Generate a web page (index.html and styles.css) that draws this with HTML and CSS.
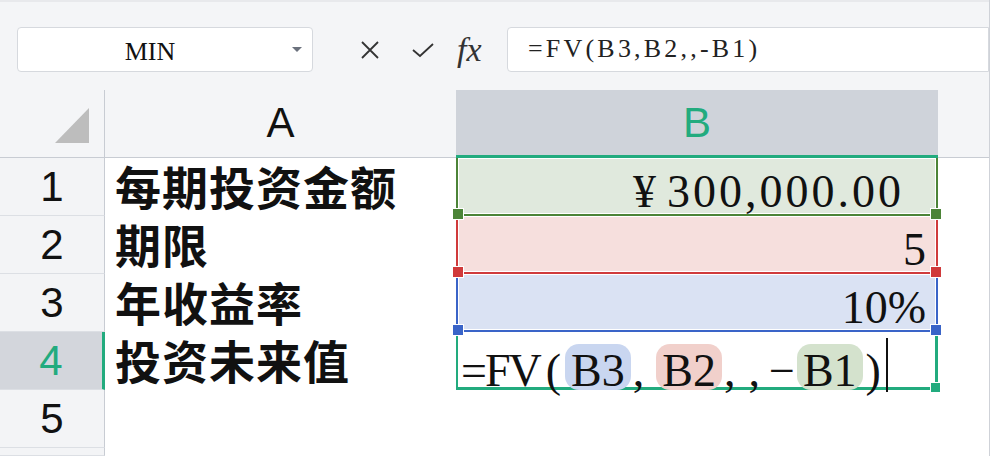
FILE: index.html
```html
<!DOCTYPE html>
<html lang="zh-CN">
<head>
    <meta charset="UTF-8">
    <title>FV 函数</title>
    <link rel="stylesheet" href="styles.css">
</head>
<body>
<div class="page">
    <div class="toolbar">
        <div class="name-box">
            <div class="name-text">MIN</div>
            <div class="name-caret"><span class="caret"></span></div>
        </div>
        <div class="fx-tools">
            <svg class="tool-cancel" width="20" height="20" viewBox="0 0 20 20">
                <path d="M2 2 L18 18 M18 2 L2 18" stroke="#333" stroke-width="1.8" fill="none"/>
            </svg>
            <svg class="tool-ok" width="24" height="18" viewBox="0 0 24 18">
                <path d="M2 9 L9 15 L22 3" stroke="#333" stroke-width="1.8" fill="none"/>
            </svg>
            <span class="tool-fx">fx</span>
        </div>
        <div class="formula-box">=FV(B3,B2,,-B1)</div>
    </div>

    <div class="sheet">
        <div class="corner">
            <svg width="34" height="35" viewBox="0 0 34 35"><polygon points="34,0 34,35 0,35" fill="#bdbdbd"/></svg>
        </div>
        <div class="col-head">A</div>
        <div class="col-head active">B</div>
        <div class="col-head"></div>

        <div class="row-head">1</div>
        <div class="cell label">每期投资金额</div>
        <div class="cell num range green"><span class="acct"><span class="yen">¥</span>300,000.00</span></div>
        <div class="cell"></div>

        <div class="row-head">2</div>
        <div class="cell label">期限</div>
        <div class="cell num range red">5</div>
        <div class="cell"></div>

        <div class="row-head">3</div>
        <div class="cell label">年收益率</div>
        <div class="cell num range blue">10%</div>
        <div class="cell"></div>

        <div class="row-head active">4</div>
        <div class="cell label">投资未来值</div>
        <div class="cell editing"><span class="fn">=FV</span><span class="paren">(</span><span class="ref blue">B3</span><span class="comma">,</span><span class="ref red">B2</span><span class="comma">,</span><span class="comma wide">,</span><span class="minus">−</span><span class="ref green">B1</span><span class="paren close">)</span><span class="cursor"></span></div>
        <div class="cell"></div>

        <div class="row-head">5</div>
        <div class="cell"></div>
        <div class="cell"></div>
        <div class="cell"></div>

        <div class="row-head"></div>
        <div class="cell"></div>
        <div class="cell"></div>
        <div class="cell"></div>
    </div>
</div>
</body>
</html>
```

FILE: styles.css
```css
/* --- 表格界面 --- */
:root {
    --teal: #22ab7e;
    --line: #c8ccd3;
    --head-bg: #f4f5f7;
    --green: #4c8437;
    --green-bg: #e0e9dd;
    --red: #d03a3b;
    --red-bg: #f6dfdd;
    --blue: #3a64c8;
    --blue-bg: #dae2f3;
}

* {
    box-sizing: border-box;
}

body {
    margin: 0;
    background: #fff;
    font-family: "Liberation Sans", "Noto Sans CJK SC", sans-serif;
    color: #111;
}

.page {
    width: 990px;
    height: 456px;
    overflow: hidden;
    border-right: 1px solid #cfd2d8;
}

/* 编辑栏 */
.toolbar {
    height: 90px;
    background: var(--head-bg);
    border-top: 2px solid #e8e9ec;
    display: flex;
    align-items: flex-start;
    padding: 25px 0 0 17px;
}

.name-box {
    width: 296px;
    height: 45px;
    background: #fff;
    border: 1px solid #d6d9de;
    border-radius: 4px;
    display: flex;
    align-items: center;
}

.name-text {
    flex: 1;
    text-align: center;
    font: 26px "Liberation Serif", serif;
    padding-top: 4px;
    color: #111;
}

.name-caret {
    width: 30px;
    display: flex;
    justify-content: center;
}

.caret {
    width: 0;
    height: 0;
    border-left: 5px solid transparent;
    border-right: 5px solid transparent;
    border-top: 5px solid #6b717d;
}

.fx-tools {
    width: 194px;
    height: 45px;
    display: flex;
    align-items: center;
    padding-left: 47px;
}

.tool-ok {
    margin-left: 31px;
}

.tool-fx {
    margin-left: 22px;
    font: italic 34px "Liberation Serif", serif;
    color: #333;
    line-height: 1;
}

.formula-box {
    flex: 1;
    height: 45px;
    background: #fff;
    border: 1px solid #d6d9de;
    border-radius: 4px 0 0 4px;
    padding-left: 20px;
    font: 26px "Liberation Serif", serif;
    letter-spacing: 3.2px;
    line-height: 42px;
    color: #222;
}

/* 网格 */
.sheet {
    display: grid;
    grid-template-columns: 105px 351px 482px 1fr;
    grid-template-rows: 68px repeat(5, 58px) 1fr;
    height: 366px;
}

.corner {
    background: var(--head-bg);
    border-right: 1px solid var(--line);
    border-bottom: 1px solid var(--line);
    display: flex;
    align-items: flex-end;
    padding: 0 0 14px 55px;
}

.col-head {
    background: var(--head-bg);
    border-bottom: 1px solid var(--line);
    text-align: center;
    font-size: 42px;
    line-height: 66px;
}

.col-head.active {
    background: #cfd3da;
    color: var(--teal);
    border-bottom: 3px solid var(--teal);
}

.row-head {
    background: #f3f4f6;
    border-right: 1px solid var(--line);
    border-bottom: 1px solid #dcdfe4;
    text-align: center;
    font-size: 42px;
    line-height: 57px;
}

.row-head.active {
    background: #d3d6dc;
    color: var(--teal);
    border-right: 3px solid var(--teal);
}

.cell {
    white-space: nowrap;
}

.cell.label {
    font: 700 46px "Liberation Sans", "Noto Sans CJK SC", sans-serif;
    letter-spacing: 1px;
    line-height: 54px;
    padding: 4px 0 0 10px;
}

.cell.num {
    font: 46px "Liberation Serif", serif;
    line-height: 51px;
    text-align: right;
    padding: 8px 10px 0 0;
}

/* 引用区域 */
.range {
    position: relative;
    border: 2px solid var(--c);
    border-top: none;
    background: var(--bg);
    box-shadow: inset 0 0 0 1px #fff;
}

.range::before,
.range::after {
    content: '';
    position: absolute;
    bottom: -6px;
    width: 10px;
    height: 10px;
    background: var(--c);
    border: 1px solid #fff;
    z-index: 2;
}

.range::before {
    left: -6px;
}

.range::after {
    right: -6px;
}

.range.green {
    --c: var(--green);
    --bg: var(--green-bg);
}

.range.red {
    --c: var(--red);
    --bg: var(--red-bg);
}

.range.blue {
    --c: var(--blue);
    --bg: var(--blue-bg);
}

.acct {
    letter-spacing: 3px;
    margin-right: 22px;
}

.yen {
    margin-right: 8px;
}

/* 编辑中的单元格 */
.editing {
    position: relative;
    border: solid var(--teal);
    border-width: 0 3px 3px 2px;
    font: 46px "Liberation Serif", serif;
    line-height: 51px;
    padding: 6px 0 0 3px;
}

.editing::after {
    content: '';
    position: absolute;
    right: -6px;
    bottom: -6px;
    width: 9px;
    height: 9px;
    background: var(--teal);
    border: 1px solid #fff;
}

.fn {
    letter-spacing: -2px;
}

.paren {
    margin-left: 6px;
}

.paren.close {
    margin-left: 3px;
}

.ref {
    display: inline-block;
    line-height: 38px;
    padding: 8px 6px 0;
    height: 46px;
    border-radius: 14px;
}

.ref.blue {
    background: #c9d6f0;
    margin-left: 4px;
}

.ref.red {
    background: #f1d0cb;
    margin-left: 12px;
}

.ref.green {
    background: #d4e2cd;
    margin-left: 2px;
}

.comma {
    margin-left: 2px;
}

.comma.wide {
    margin-left: 13px;
}

.minus {
    margin-left: 9px;
}

.cursor {
    display: inline-block;
    width: 2px;
    height: 54px;
    background: #111;
    margin-left: 5px;
    vertical-align: -6px;
}
```
